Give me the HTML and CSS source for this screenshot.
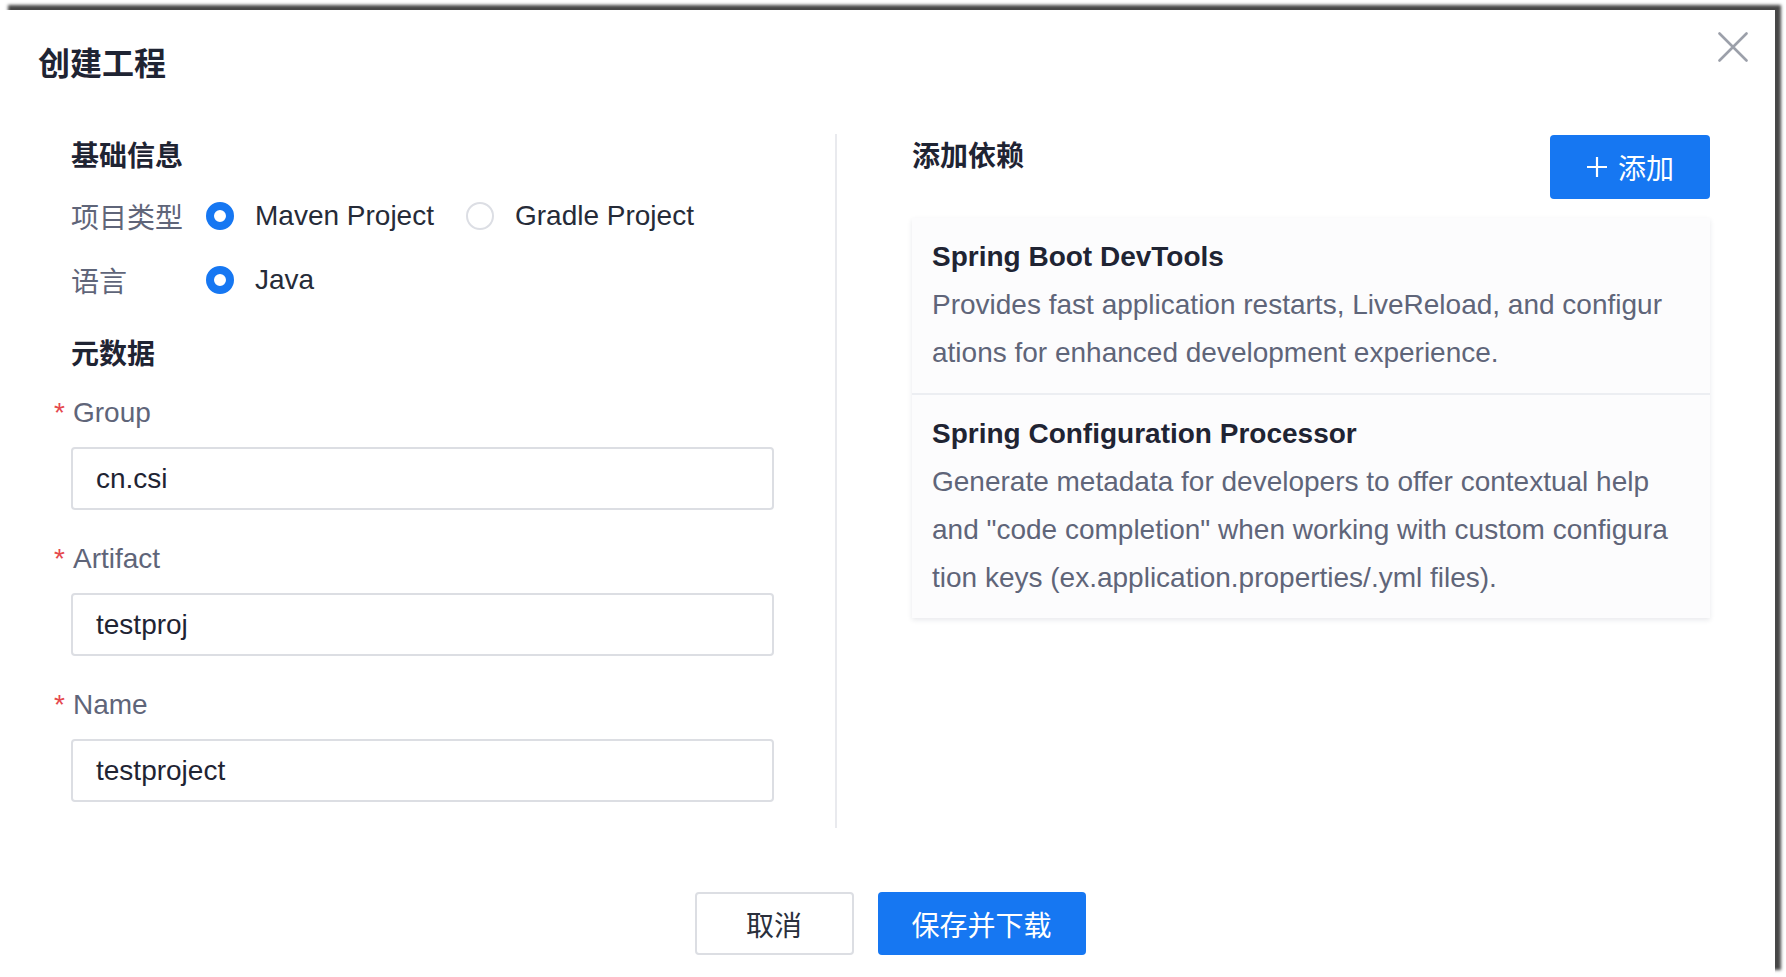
FILE: index.html
```html
<!DOCTYPE html>
<html lang="zh-CN">
<head>
<meta charset="utf-8">
<title>创建工程</title>
<link rel="stylesheet" href="styles.css">
</head>
<body>
<div class="dialog">
  <div class="dialog-header">
    <h1 class="dialog-title">创建工程</h1>
    <button class="close-btn" aria-label="关闭">
      <svg width="30" height="30" viewBox="0 0 30 30"><path d="M1.5 1.5 L28.5 28.5 M28.5 1.5 L1.5 28.5" stroke="#9ca0aa" stroke-width="2.6" fill="none" stroke-linecap="round"/></svg>
    </button>
  </div>

  <div class="dialog-body">
    <div class="col-left">
      <div class="section-title">基础信息</div>
      <div class="row first-row">
        <div class="row-label">项目类型</div>
        <label class="option"><span class="radio checked"></span><span class="option-text">Maven Project</span></label>
        <label class="option"><span class="radio"></span><span class="option-text">Gradle Project</span></label>
      </div>
      <div class="row">
        <div class="row-label">语言</div>
        <label class="option"><span class="radio checked"></span><span class="option-text">Java</span></label>
      </div>

      <div class="section-title meta-title">元数据</div>
      <div class="form-item first-item">
        <div class="form-label"><span class="req">*</span>Group</div>
        <div class="input">cn.csi</div>
      </div>
      <div class="form-item">
        <div class="form-label"><span class="req">*</span>Artifact</div>
        <div class="input">testproj</div>
      </div>
      <div class="form-item">
        <div class="form-label"><span class="req">*</span>Name</div>
        <div class="input">testproject</div>
      </div>
    </div>

    <div class="col-right">
      <div class="right-head">
        <div class="section-title">添加依赖</div>
        <button class="btn-add">
          <svg width="22" height="22" viewBox="0 0 22 22"><path d="M11 1 V21 M1 11 H21" stroke="#fff" stroke-width="2.2" fill="none"/></svg>
          <span>添加</span>
        </button>
      </div>
      <div class="dep-list">
        <div class="dep-item">
          <div class="dep-name">Spring Boot DevTools</div>
          <div class="dep-desc">Provides fast application restarts, LiveReload, and configurations for enhanced development experience.</div>
        </div>
        <div class="dep-item">
          <div class="dep-name">Spring Configuration Processor</div>
          <div class="dep-desc">Generate metadata for developers to offer contextual help and "code completion" when working with custom configuration keys (ex.application.properties/.yml files).</div>
        </div>
      </div>
    </div>
  </div>

  <div class="dialog-footer">
    <button class="btn btn-cancel">取消</button>
    <button class="btn btn-primary">保存并下载</button>
  </div>
</div>
</body>
</html>
```

FILE: styles.css
```css
* { box-sizing: border-box; }

html, body {
  margin: 0;
  padding: 0;
  background: #ffffff;
  overflow: hidden;
}

body {
  font-family: "Liberation Sans", "Noto Sans CJK SC", sans-serif;
  font-size: 28px;
  color: #1f2433;
}

.dialog {
  position: relative;
  margin-top: 10px;
  width: 1775px;
  height: 967px;
  background: #ffffff;
  box-shadow: 7px -6px 3px -1px rgba(0, 0, 0, 0.72);
}

.dialog-header {
  padding: 32px 0 0 38px;
}

.dialog-title {
  margin: 0;
  font-size: 32px;
  line-height: 44px;
  font-weight: 700;
  color: #1f2433;
}

.close-btn {
  position: absolute;
  top: 22px;
  right: 27px;
  width: 30px;
  height: 30px;
  padding: 0;
  border: 0;
  background: transparent;
  display: flex;
}

.dialog-body {
  display: flex;
  margin-top: 48px;
  padding-left: 71px;
}

.col-left {
  width: 766px;
  padding-right: 62px;
  padding-bottom: 26px;
  border-right: 2px solid #e9eaee;
}

.section-title {
  font-size: 28px;
  line-height: 38px;
  padding-top: 4px;
  font-weight: 700;
  color: #1f2433;
}

.row {
  display: flex;
  align-items: center;
  height: 64px;
  padding-top: 2px;
}

.first-row { margin-top: 7px; }

.row-label {
  width: 135px;
  color: #5f6579;
}

.option {
  display: flex;
  align-items: center;
  gap: 21px;
  margin-right: 32px;
  color: #262b38;
}

.radio {
  width: 28px;
  height: 28px;
  border-radius: 50%;
  border: 2px solid #dcdee4;
  background: #fff;
  flex: none;
}

.radio.checked {
  border: 8px solid #1677f2;
}

.meta-title { margin-top: 21px; }

.form-item { margin-top: 29px; }
.form-item.first-item { margin-top: 19px; }

.form-label {
  line-height: 40px;
  color: #5f6579;
}

.req {
  display: inline-block;
  width: 19px;
  margin-left: -17px;
  color: #e5484d;
}

.input {
  margin-top: 14px;
  width: 703px;
  height: 63px;
  border: 2px solid #dcdee3;
  border-radius: 4px;
  padding-left: 23px;
  display: flex;
  align-items: center;
  color: #1f2433;
}

.col-right {
  width: 873px;
  padding-left: 75px;
}

.right-head {
  display: flex;
  justify-content: space-between;
  align-items: flex-start;
}

.btn-add {
  margin-top: 1px;
  width: 160px;
  height: 64px;
  border: 0;
  border-radius: 4px;
  background: #1677f2;
  color: #fff;
  font-family: inherit;
  font-size: 28px;
  display: flex;
  align-items: center;
  justify-content: center;
  gap: 10px;
  padding: 0;
}

.dep-list {
  margin-top: 19px;
  background: #fcfcfd;
  box-shadow: 0 2px 5px rgba(30, 40, 70, 0.10);
}

.dep-item {
  padding: 15px 41px 16px 20px;
}

.dep-item + .dep-item {
  border-top: 2px solid #eceef2;
}

.dep-name {
  line-height: 48px;
  font-weight: 700;
  color: #1f2433;
}

.dep-desc {
  line-height: 48px;
  color: #5f6579;
  word-break: break-all;
}

.dialog-footer {
  display: flex;
  justify-content: center;
  gap: 24px;
  padding: 64px 0 0 5px;
}

.btn {
  height: 63px;
  border-radius: 4px;
  font-family: inherit;
  font-size: 28px;
  padding: 0;
}

.btn-cancel {
  width: 159px;
  border: 2px solid #dcdee3;
  background: #fff;
  color: #2a2f3c;
}

.btn-primary {
  width: 208px;
  border: 0;
  background: #1677f2;
  color: #fff;
}
```
